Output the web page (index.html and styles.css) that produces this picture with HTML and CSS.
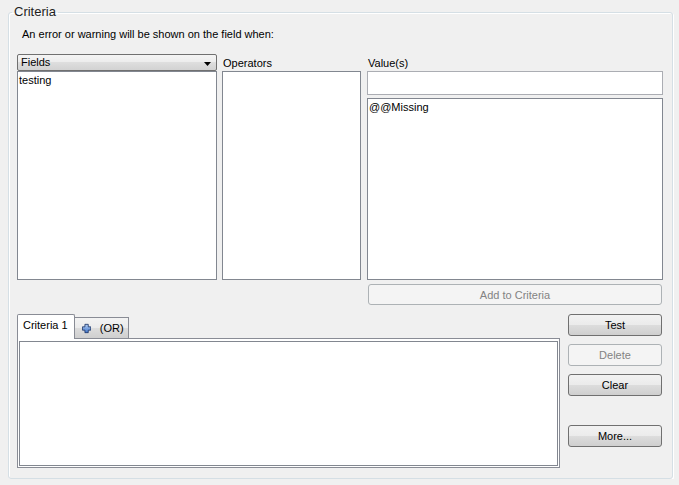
FILE: index.html
```html
<!DOCTYPE html>
<html>
<head>
    <meta charset="utf-8">
    <title>Criteria</title>
    <link rel="stylesheet" href="styles.css">
</head>
<body>
<fieldset class="criteria-group">
    <legend>Criteria</legend>
    <div class="intro">An error or warning will be shown on the field when:</div>

    <div class="picker">
        <div class="col col-fields">
            <div class="combo">
                <span>Fields</span>
                <svg class="combo-arrow" width="7" height="4" viewBox="0 0 7 4"><path d="M0 0H7L3.5 4Z" fill="#000"/></svg>
            </div>
            <div class="listbox">
                <div class="list-item">testing</div>
            </div>
        </div>
        <div class="col col-ops">
            <div class="col-label">Operators</div>
            <div class="listbox"></div>
        </div>
        <div class="col col-values">
            <div class="col-label">Value(s)</div>
            <input class="value-input" type="text">
            <div class="listbox values-list">
                <div class="list-item">@@Missing</div>
            </div>
            <button class="btn btn-add" disabled>Add to Criteria</button>
        </div>
    </div>

    <div class="bottom">
        <div class="tabs">
            <div class="tab-strip">
                <div class="tab tab-active">Criteria 1</div>
                <div class="tab">
                    <svg class="plus-icon" width="11" height="11" viewBox="0 0 11 11">
                        <defs>
                            <linearGradient id="plusFill" x1="0" y1="0" x2="0" y2="1">
                                <stop offset="0" stop-color="#b5d0f5"/>
                                <stop offset="1" stop-color="#3f74c9"/>
                            </linearGradient>
                        </defs>
                        <path d="M3.5 0.5H7.5V3.5H10.5V7.5H7.5V10.5H3.5V7.5H0.5V3.5H3.5Z" fill="url(#plusFill)" stroke="#1c3466" stroke-width="1"/>
                    </svg>
                    <span>(OR)</span>
                </div>
            </div>
            <div class="tab-panel">
                <div class="panel-box"></div>
            </div>
        </div>
        <div class="side-buttons">
            <button class="btn">Test</button>
            <button class="btn" disabled>Delete</button>
            <button class="btn">Clear</button>
            <button class="btn btn-more">More...</button>
        </div>
    </div>
</fieldset>
</body>
</html>
```

FILE: styles.css
```css
body {
    margin: 0;
    padding: 4px 6px 0 8px;
    background-color: #f0f0f0;
    font-family: "Liberation Sans", Arial, sans-serif;
    font-size: 11px;
    line-height: 13px;
    color: #000;
}

.criteria-group {
    margin: 0;
    padding: 8px 9px 10px 8px;
    border: 1px solid #d5dfe5;
    border-radius: 3px;
    box-shadow: 1px 1px 0 #ffffff, inset 1px 1px 0 #ffffff;
}

.criteria-group legend {
    margin-left: -5px;
    padding: 0 2px;
    font-size: 13px;
    line-height: 16px;
    color: #1e1e1e;
}

.intro {
    padding-left: 5px;
    margin-bottom: 13px;
}

.picker {
    display: flex;
    width: 646px;
}

.col {
    display: flex;
    flex-direction: column;
}

.col-fields {
    width: 200px;
    margin-right: 5px;
}

.col-ops {
    width: 139px;
    margin-right: 6px;
}

.col-values {
    width: 296px;
}

.col-label {
    height: 17px;
    padding: 3px 0 0 1px;
    box-sizing: border-box;
}

.combo {
    height: 17px;
    box-sizing: border-box;
    display: flex;
    align-items: center;
    justify-content: space-between;
    padding: 0 5px 0 3px;
    border: 1px solid #707070;
    border-radius: 2px;
    background: linear-gradient(#f4f4f4 0%, #ececec 50%, #dedede 50%, #d2d2d2 100%);
}

.combo-arrow {
    margin-top: 2px;
}

.listbox {
    height: 209px;
    box-sizing: border-box;
    border: 1px solid #828790;
    background-color: #fff;
    padding: 2px 1px;
}

.list-item {
    white-space: nowrap;
}

.value-input {
    height: 24px;
    margin: 0;
    box-sizing: border-box;
    border: 1px solid #abadb3;
    background-color: #fff;
    font: inherit;
}

.values-list {
    height: 182px;
    margin-top: 3px;
}

.btn {
    height: 22px;
    padding: 0;
    box-sizing: border-box;
    border: 1px solid #707070;
    border-radius: 3px;
    background: linear-gradient(#f2f2f2 0%, #ebebeb 50%, #dddddd 50%, #cfcfcf 100%);
    font-family: inherit;
    font-size: 11px;
    color: #000;
}

.btn:disabled {
    border-color: #adb2b5;
    background: #f4f4f4;
    color: #838383;
}

.btn-add {
    height: 21px;
    margin: 4px 1px 0;
}

.bottom {
    display: flex;
    width: 646px;
    margin-top: 9px;
}

.tabs {
    width: 543px;
}

.tab-strip {
    display: flex;
    align-items: flex-end;
    height: 24px;
}

.tab {
    height: 21px;
    box-sizing: border-box;
    display: flex;
    align-items: center;
    padding: 0 4px 0 7px;
    border: 1px solid #898c95;
    border-bottom: none;
    background: linear-gradient(#f3f3f3 0%, #ebebeb 50%, #dddddd 50%, #cfcfcf 100%);
}

.tab-active {
    position: relative;
    z-index: 1;
    height: 25px;
    margin-bottom: -1px;
    padding: 0 6px 4px 5px;
    border-radius: 2px 2px 0 0;
    background: #fff;
}

.tab-active + .tab {
    border-left: none;
    width: 54px;
    padding-left: 7px;
}

.plus-icon {
    margin-right: 9px;
}

.tab-panel {
    height: 130px;
    box-sizing: border-box;
    padding: 2px 1px 1px;
    border: 1px solid #898c95;
    background-color: #fff;
}

.panel-box {
    height: 100%;
    box-sizing: border-box;
    border: 1px solid #828790;
}

.side-buttons {
    width: 94px;
    margin-left: 8px;
    display: flex;
    flex-direction: column;
    gap: 8px;
}

.btn-more {
    margin-top: 21px;
}
```
